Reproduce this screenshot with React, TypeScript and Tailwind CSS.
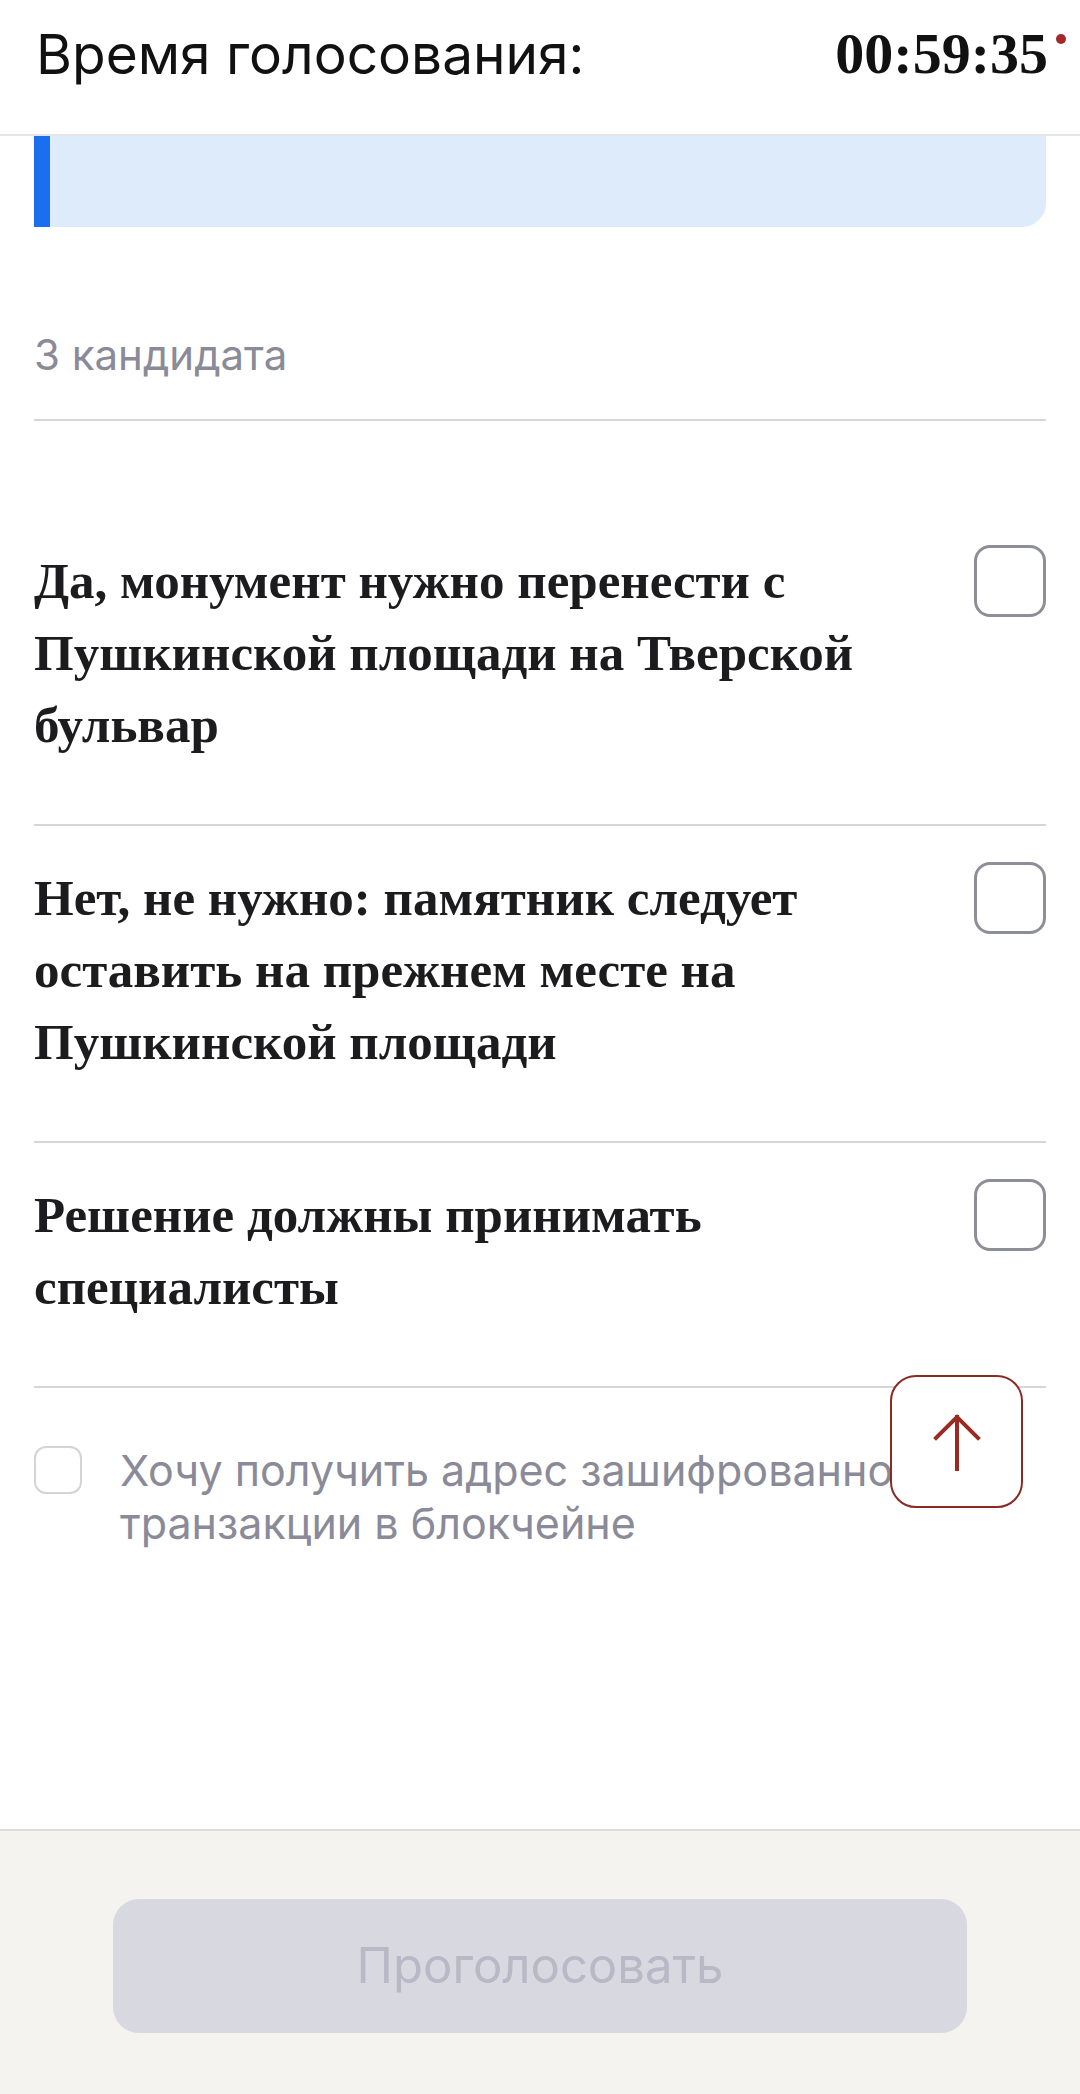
interface Option {
  id: number;
  text: string;
}

const options: Option[] = [
  { id: 1, text: 'Да, монумент нужно перенести с Пушкинской площади на Тверской бульвар' },
  { id: 2, text: 'Нет, не нужно: памятник следует оставить на прежнем месте на Пушкинской площади' },
  { id: 3, text: 'Решение должны принимать специалисты' },
];

const sans = "font-['Inter','Roboto',sans-serif]";
const serif = "font-['Liberation_Serif','DejaVu_Serif',serif]";

const App = () => {
  return (
    <div className={`relative flex min-h-[2094px] w-[1080px] flex-col bg-white ${sans}`}>
      {/* Header with timer */}
      <header className="flex h-[136px] items-start justify-between border-b-2 border-[#e6e6e8] pl-[36px] pr-[14px] pt-[26px]">
        <span className="text-[55px] leading-[56px] text-[#111111]">Время голосования:</span>
        <div className="flex items-start">
          <span className={`${serif} text-[58px] font-bold leading-[56px] text-[#111111]`}>00:59:35</span>
          <span className="ml-[8px] mt-[8px] h-[10px] w-[10px] rounded-full bg-[#a3282a]" />
        </div>
      </header>

      <main className="flex-1 px-[34px]">
        {/* Info block, scrolled under the header */}
        <div className="flex h-[91px] overflow-hidden rounded-br-[24px] bg-[#deebfb]">
          <div className="w-[16px] bg-[#1a6ff0]" />
        </div>

        <div className="mt-[102px] border-b-2 border-[#d6d6da] pb-[38px]">
          <span className="text-[42px] leading-[52px] text-[#8a8a98]">3 кандидата</span>
        </div>

        <div className="mt-[88px]">
          {options.map((option) => (
            <div
              key={option.id}
              className="flex items-start justify-between border-b-2 border-[#d6d6da] pb-[63px] pt-[36px]"
            >
              <p className={`${serif} w-[900px] text-[51px] font-bold leading-[72px] text-[#1c1c1e]`}>
                {option.text}
              </p>
              <div className="h-[72px] w-[72px] shrink-0 rounded-[16px] border-[3px] border-[#8e8e99]" />
            </div>
          ))}
        </div>

        <label className="flex items-start pt-[56px]">
          <span className="mt-[2px] h-[48px] w-[48px] shrink-0 rounded-[12px] border-2 border-[#d4d4d8]" />
          <span className="ml-[38px] text-[43px] leading-[53px] text-[#8a8a98]">
            Хочу получить адрес зашифрованной транзакции в блокчейне
          </span>
        </label>
      </main>

      {/* Scroll to top */}
      <button className="absolute right-[57px] top-[1375px] flex h-[133px] w-[133px] items-center justify-center rounded-[26px] border-2 border-[#8b2a22] bg-white">
        <svg width="48" height="58" viewBox="0 0 48 58" fill="none" stroke="#9a2a22" strokeWidth="4" strokeLinecap="square">
          <path d="M24 4V56" />
          <path d="M3 25L24 4L45 25" />
        </svg>
      </button>

      <footer className="flex h-[265px] justify-center border-t-2 border-[#dcdcd8] bg-[#f4f3ef] pt-[68px]">
        <button className="h-[134px] w-[854px] rounded-[26px] bg-[#d8d8e0] text-[49px] text-[#b8b8c6]">
          Проголосовать
        </button>
      </footer>
    </div>
  );
};

export default App;
